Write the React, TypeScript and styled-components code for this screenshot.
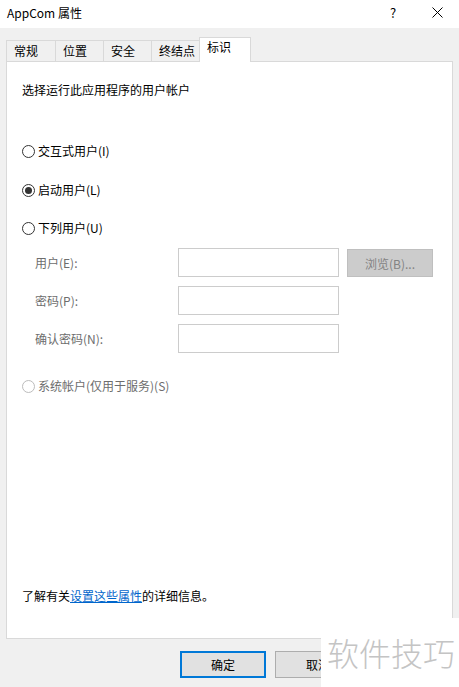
import styled, { createGlobalStyle } from "styled-components";

const GlobalStyles = createGlobalStyle`
  html, body {
    margin: 0;
    padding: 0;
    background: #f0f0f0;
  }
  body {
    font-family: "Noto Sans CJK SC", "Noto Sans", sans-serif;
    font-size: 12px;
    color: #000;
  }
`;

const Window = styled.div`
  position: relative;
  width: 459px;
  height: 687px;
  display: flex;
  flex-direction: column;
  background: #f0f0f0;
  overflow: hidden;
`;

const TitleBar = styled.div`
  flex: none;
  height: 28px;
  display: flex;
  align-items: center;
  background: #fff;
  padding-left: 7px;
`;

const Title = styled.div`
  flex: 1;
  font-size: 12px;
  line-height: 16px;
  margin-top: -2px;
`;

const TitleButton = styled.div`
  width: 44px;
  height: 24px;
  display: flex;
  align-items: center;
  justify-content: center;
  margin-top: -4px;
  font-size: 13px;
`;

const Body = styled.div`
  flex: 1;
  display: flex;
  flex-direction: column;
  padding: 9px 6px 0;
`;

const TabRow = styled.div`
  flex: none;
  display: flex;
  align-items: flex-end;
  height: 24px;
  position: relative;
  z-index: 1;
`;

const Tab = styled.div<{ $active?: boolean; $w: number }>`
  box-sizing: border-box;
  width: ${(p) => p.$w}px;
  height: ${(p) => (p.$active ? 25 : 21)}px;
  margin-bottom: ${(p) => (p.$active ? -1 : 0)}px;
  margin-left: -1px;
  padding: ${(p) => (p.$active ? "1px 0 0 7px" : "2px 0 0 7px")};
  border: 1px solid #d9d9d9;
  border-bottom: none;
  background: ${(p) => (p.$active ? "#fff" : "#f0f0f0")};
  line-height: 16px;
  white-space: nowrap;
  &:first-child {
    margin-left: 0;
  }
`;

const Panel = styled.div`
  box-sizing: border-box;
  height: 578px;
  flex: none;
  background: #fff;
  border: 1px solid #d9d9d9;
  display: flex;
  flex-direction: column;
  padding: 20px 15px 34px;
`;

const Line = styled.div`
  line-height: 16px;
  height: 16px;
`;

const RadioRow = styled.div<{ $top: number; $disabled?: boolean }>`
  display: flex;
  align-items: center;
  gap: 3px;
  height: 16px;
  margin-top: ${(p) => p.$top}px;
  color: ${(p) => (p.$disabled ? "#6d6d6d" : "#000")};
  line-height: 16px;
`;

const RadioCircle = styled.span<{ $checked?: boolean; $disabled?: boolean }>`
  box-sizing: border-box;
  width: 13px;
  height: 13px;
  border-radius: 50%;
  border: 1px solid ${(p) => (p.$disabled ? "#bcbcbc" : "#333")};
  display: flex;
  align-items: center;
  justify-content: center;
  &::after {
    content: "";
    display: ${(p) => (p.$checked ? "block" : "none")};
    width: 7px;
    height: 7px;
    border-radius: 50%;
    background: #333;
  }
`;

const FormGrid = styled.div`
  margin-top: 12px;
  padding-left: 13px;
  display: grid;
  grid-template-columns: 135px 161px 86px;
  column-gap: 8px;
  row-gap: 9px;
  align-items: center;
  color: #6d6d6d;
`;

const FieldLabel = styled.div`
  line-height: 16px;
  margin-top: 1px;
`;

const TextBox = styled.div`
  box-sizing: border-box;
  height: 29px;
  border: 1px solid #cccccc;
  background: #fff;
`;

const BrowseButton = styled.div`
  box-sizing: border-box;
  height: 28px;
  margin-top: 1px;
  background: #cccccc;
  border: 1px solid #bfbfbf;
  color: #838383;
  display: flex;
  align-items: center;
  justify-content: center;
`;

const Info = styled.div`
  margin-top: auto;
  line-height: 16px;
`;

const InfoLink = styled.span`
  color: #0066cc;
  text-decoration: underline;
`;

const Footer = styled.div`
  flex: none;
  box-sizing: border-box;
  height: 48px;
  display: flex;
  align-items: flex-start;
  padding: 12px 0 0 174px;
  gap: 9px;
`;

const DialogButton = styled.div<{ $default?: boolean }>`
  box-sizing: border-box;
  width: 86px;
  height: 27px;
  background: #e1e1e1;
  border: ${(p) => (p.$default ? "2px solid #0078d7" : "1px solid #adadad")};
  display: flex;
  align-items: center;
  justify-content: center;
  line-height: 16px;
`;

const Watermark = styled.div`
  position: absolute;
  left: 321px;
  top: 618px;
  width: 138px;
  height: 69px;
  background: #fff;
  display: flex;
  align-items: center;
  justify-content: center;
  padding: 0 0 2px 2px;
  box-sizing: border-box;
  color: #c4c4c4;
  font-size: 32px;
  font-weight: 300;
  white-space: nowrap;
`;

const tabs = [
  { label: "常规", w: 50 },
  { label: "位置", w: 49 },
  { label: "安全", w: 49 },
  { label: "终结点", w: 49 },
  { label: "标识", w: 52, active: true },
];

const fields = ["用户(E):", "密码(P):", "确认密码(N):"];

const App = () => {
  return (
    <Window>
      <GlobalStyles />
      <TitleBar>
        <Title>AppCom 属性</Title>
        <TitleButton>?</TitleButton>
        <TitleButton>
          <svg width="11" height="11" viewBox="0 0 11 11">
            <path d="M0.5 0.5 L10.5 10.5 M10.5 0.5 L0.5 10.5" stroke="#000" strokeWidth="1" />
          </svg>
        </TitleButton>
      </TitleBar>
      <Body>
        <TabRow>
          {tabs.map((t) => (
            <Tab key={t.label} $w={t.w} $active={t.active}>
              {t.label}
            </Tab>
          ))}
        </TabRow>
        <Panel>
          <Line>选择运行此应用程序的用户帐户</Line>
          <RadioRow $top={45}>
            <RadioCircle />
            交互式用户(I)
          </RadioRow>
          <RadioRow $top={23}>
            <RadioCircle $checked />
            启动用户(L)
          </RadioRow>
          <RadioRow $top={22}>
            <RadioCircle />
            下列用户(U)
          </RadioRow>
          <FormGrid>
            {fields.map((f, i) => (
              <>
                <FieldLabel key={f}>{f}</FieldLabel>
                <TextBox key={f + "-box"} />
                {i === 0 ? <BrowseButton>浏览(B)...</BrowseButton> : <div />}
              </>
            ))}
          </FormGrid>
          <RadioRow $top={25} $disabled>
            <RadioCircle $disabled />
            系统帐户(仅用于服务)(S)
          </RadioRow>
          <Info>
            了解有关<InfoLink>设置这些属性</InfoLink>的详细信息。
          </Info>
        </Panel>
        <Footer>
          <DialogButton $default>确定</DialogButton>
          <DialogButton>取消</DialogButton>
        </Footer>
      </Body>
      <Watermark>软件技巧</Watermark>
    </Window>
  );
};

export default App;
